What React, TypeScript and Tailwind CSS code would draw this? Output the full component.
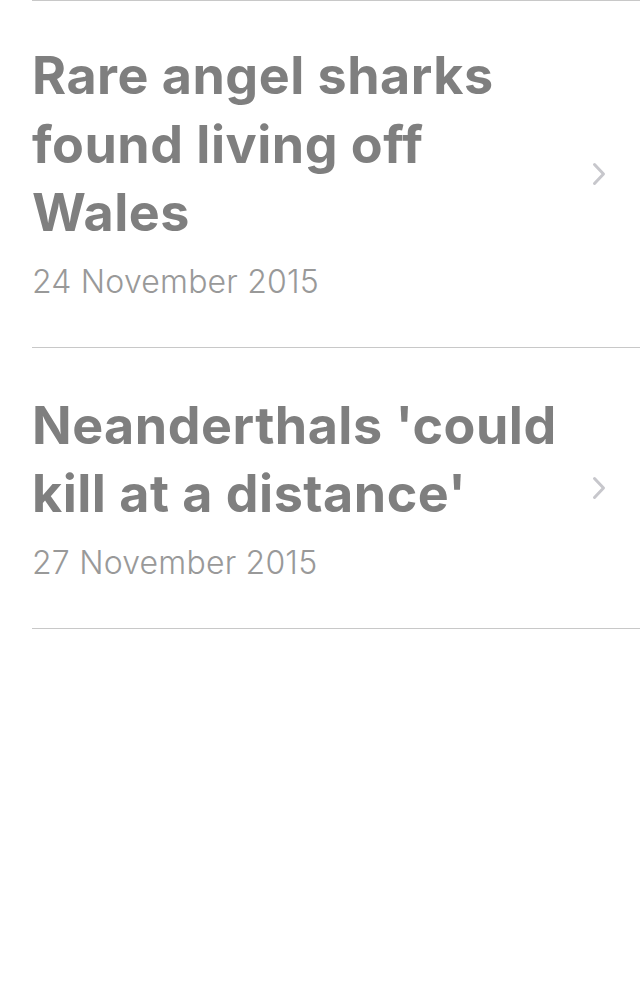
import React from "react";

const items = [
  { title: "Rare angel sharks found living off Wales", date: "24 November 2015" },
  { title: "Neanderthals 'could kill at a distance'", date: "27 November 2015" },
];

function Chevron() {
  return (
    <svg width="14" height="24" viewBox="0 0 14 24" fill="none">
      <path d="M2.5 2.5 L11.5 12 L2.5 21.5" stroke="#c7c7cc" strokeWidth="3" strokeLinecap="round" strokeLinejoin="round" />
    </svg>
  );
}

export default function App() {
  return (
    <div className="w-[640px] h-[1000px] bg-white" style={{ fontFamily: "Inter, 'Noto Sans', sans-serif" }}>
      <div className="ml-8 border-t border-[#c8c8c8]">
        {items.map((it, i) => (
          <div key={i} className="flex items-center border-b border-[#c8c8c8] pr-[34px]">
            <div className={`w-[544px] shrink-0 pb-[46px] ${i === 0 ? "pt-[41px]" : "pt-[44px]"}`}>
              <div className="text-[52px] leading-[68.5px] font-bold text-[#7f7f7f] tracking-[0.5px]">{it.title}</div>
              <div className="text-[32px] leading-[38px] font-light text-[#999999] tracking-[0.2px] mt-[15px]">{it.date}</div>
            </div>
            <div className="flex-1 flex justify-end">
              <Chevron />
            </div>
          </div>
        ))}
      </div>
    </div>
  );
}
